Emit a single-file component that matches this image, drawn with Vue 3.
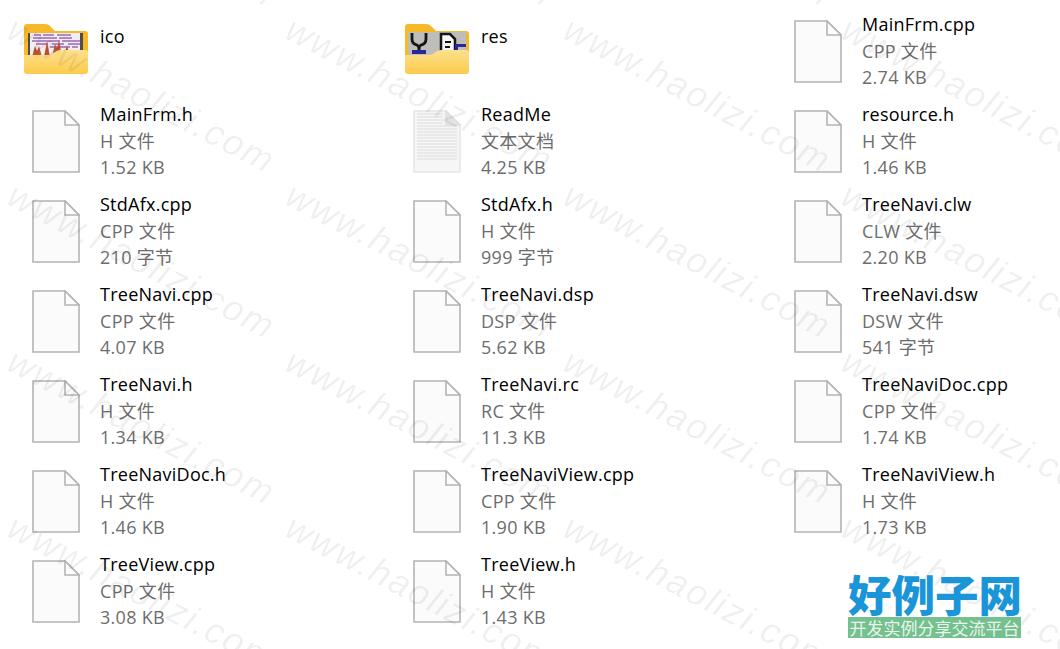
<script setup>
const files = [
  { name: "ico", folder: "ico" },
  { name: "res", folder: "res" },
  { name: "MainFrm.cpp", type: "CPP 文件", size: "2.74 KB" },
  { name: "MainFrm.h", type: "H 文件", size: "1.52 KB" },
  { name: "ReadMe", type: "文本文档", size: "4.25 KB", text: true },
  { name: "resource.h", type: "H 文件", size: "1.46 KB" },
  { name: "StdAfx.cpp", type: "CPP 文件", size: "210 字节" },
  { name: "StdAfx.h", type: "H 文件", size: "999 字节" },
  { name: "TreeNavi.clw", type: "CLW 文件", size: "2.20 KB" },
  { name: "TreeNavi.cpp", type: "CPP 文件", size: "4.07 KB" },
  { name: "TreeNavi.dsp", type: "DSP 文件", size: "5.62 KB" },
  { name: "TreeNavi.dsw", type: "DSW 文件", size: "541 字节" },
  { name: "TreeNavi.h", type: "H 文件", size: "1.34 KB" },
  { name: "TreeNavi.rc", type: "RC 文件", size: "11.3 KB" },
  { name: "TreeNaviDoc.cpp", type: "CPP 文件", size: "1.74 KB" },
  { name: "TreeNaviDoc.h", type: "H 文件", size: "1.46 KB" },
  { name: "TreeNaviView.cpp", type: "CPP 文件", size: "1.90 KB" },
  { name: "TreeNaviView.h", type: "H 文件", size: "1.73 KB" },
  { name: "TreeView.cpp", type: "CPP 文件", size: "3.08 KB" },
  { name: "TreeView.h", type: "H 文件", size: "1.43 KB" },
]

const textLines = [4, 7, 10, 13, 16, 19, 22, 25, 28, 31, 34, 37, 40, 43, 46, 49]

// watermark stamps, one per repeat of the tile
const marks = []
for (let row = -1; row < 5; row++) {
  for (let col = -1; col < 5; col++) {
    marks.push({ left: col * 278 + 20, top: row * 166 + 8 })
  }
}
</script>

<template>
  <div class="page">
    <div class="grid">
      <div v-for="f in files" :key="f.name" class="item" :class="{ 'is-folder': f.folder }">
        <div class="icon">
          <svg v-if="f.folder" class="folder" width="64" height="50" viewBox="0 0 64 50">
            <path d="M0 3a3 3 0 0 1 3-3h18q3 0 5 2l5 5h30a3 3 0 0 1 3 3v24H0z" fill="#f8b928" />
            <g v-if="f.folder === 'ico'">
              <rect x="4" y="9" width="55" height="25" fill="#f1edf2" />
              <rect x="4" y="9" width="2" height="25" fill="#4d4d4d" />
              <rect x="56" y="9" width="3" height="25" fill="#4d4d4d" />
              <path d="M10 11h7M19 11h11M33 11h14M9 14h24M35 14h13M8 17h28M38 17h18M12 20h12M28 20h12M44 20h12M26 23h20M48 23h6" stroke="#9a68b8" stroke-width="1.4" />
              <path d="M8 33l3-11 2 5 2-5 3 11zM20 33l3-16 3 16zM28 33l3-13 2 4 2-8 3 17zM40 33l3-12 3 12z" fill="#c2552c" />
            </g>
            <g v-else>
              <rect x="3" y="8" width="58" height="25" fill="#bfbdb9" />
              <path d="M7 9v6q0 5 5 6l2 2 2-2q5-1 5-6V9" fill="none" stroke="#161616" stroke-width="2.8" />
              <path d="M14 22v5" stroke="#161616" stroke-width="3" />
              <path d="M7 28h14" stroke="#28289a" stroke-width="4" />
              <path d="M36 10h9l5 5v17H36z" fill="#f6f6f6" stroke="#161616" stroke-width="2.5" />
              <path d="M40 18h6M40 23h5" stroke="#161616" stroke-width="2" />
              <rect x="50" y="20" width="11" height="3" fill="#28289a" />
              <rect x="50" y="20" width="3" height="9" fill="#28289a" />
              <rect x="55" y="26" width="6" height="6" fill="#161616" />
            </g>
            <path d="M0 31h24q3 0 6-2.500t6-2.500h25a3 3 0 0 1 3 3v18a3 3 0 0 1-3 3H3a3 3 0 0 1-3-3z" fill="url(#folderFront)" />
            <defs>
              <linearGradient id="folderFront" x1="0" y1="0" x2="0" y2="1">
                <stop offset="0" stop-color="#fde08e" />
                <stop offset="1" stop-color="#fccb4c" />
              </linearGradient>
            </defs>
          </svg>
          <svg v-else width="48" height="63" viewBox="0 0 48 63">
            <path d="M1 1h32l14 14v47H1z" :fill="f.text ? '#f6f6f6' : '#fbfbfb'" :stroke="f.text ? '#e6e6e6' : '#b4b4b4'" stroke-width="1.6" />
            <template v-if="f.text">
              <path v-for="y in textLines" :key="y" :d="`M4 ${y}H${y < 15 ? 30 : 44}`" stroke="#dcdcdc" />
            </template>
            <path d="M33 1v14h14z" :fill="f.text ? '#e4e4e4' : '#fdfdfd'" :stroke="f.text ? '#e0e0e0' : '#b4b4b4'" stroke-width="1.6" />
          </svg>
        </div>
        <div class="info">
          <div class="name">{{ f.name }}</div>
          <template v-if="!f.folder">
            <div class="meta">{{ f.type }}</div>
            <div class="meta">{{ f.size }}</div>
          </template>
        </div>
      </div>
    </div>

    <div class="marks">
      <span v-for="(m, i) in marks" :key="i" class="mark" :style="{ left: m.left + 'px', top: m.top + 'px' }">www.haolizi.com</span>
    </div>

    <div class="logo">
      <div class="logo-title">好例子网</div>
      <div class="logo-sub">开发实例分享交流平台</div>
    </div>
  </div>
</template>

<style scoped>
.page {
  position: relative;
  width: 1060px;
  height: 649px;
  overflow: hidden;
  background: #fff;
  font-family: "Liberation Sans", "Noto Sans CJK SC", sans-serif;
}
.grid {
  display: grid;
  grid-template-columns: repeat(3, 381px);
  grid-auto-rows: 90px;
}
.item {
  display: flex;
  align-items: flex-start;
  padding-left: 32px;
  padding-top: 20px;
  height: 90px;
  box-sizing: border-box;
}
.icon {
  width: 48px;
  height: 64px;
  flex: none;
  position: relative;
}
.folder {
  position: absolute;
  left: -8px;
  top: 4px;
}
.info {
  margin-left: 20px;
  margin-top: -9px;
}
.is-folder .info {
  margin-top: 3px;
}
.name {
  font-family: "Open Sans", "Noto Sans CJK SC", sans-serif;
  font-size: 18px;
  line-height: 26px;
  letter-spacing: 0.25px;
  margin-bottom: 1px;
  color: #000;
}
.meta {
  font-family: "Open Sans", "Noto Sans CJK SC", sans-serif;
  font-size: 18px;
  line-height: 26px;
  letter-spacing: 0.3px;
  color: #6d6d6d;
}
.marks {
  position: absolute;
  inset: 0;
  pointer-events: none;
}
.mark {
  position: absolute;
  font-family: "Liberation Sans", sans-serif;
  font-style: italic;
  font-size: 36px;
  letter-spacing: 2px;
  color: rgba(0, 0, 0, 0.065);
  white-space: nowrap;
  transform: rotate(27.5deg);
  transform-origin: left top;
}
.logo {
  position: absolute;
  left: 848px;
  top: 571px;
  width: 173px;
}
.logo-title {
  font-family: "Noto Sans CJK SC", sans-serif;
  font-weight: 900;
  font-size: 43.5px;
  line-height: 46px;
  color: #1a95d8;
  white-space: nowrap;
}
.logo-sub {
  height: 21px;
  line-height: 21px;
  background: #74c08e;
  color: #e8f5ec;
  font-family: "Noto Sans CJK SC", sans-serif;
  font-size: 17px;
  text-align: center;
  white-space: nowrap;
}
</style>
